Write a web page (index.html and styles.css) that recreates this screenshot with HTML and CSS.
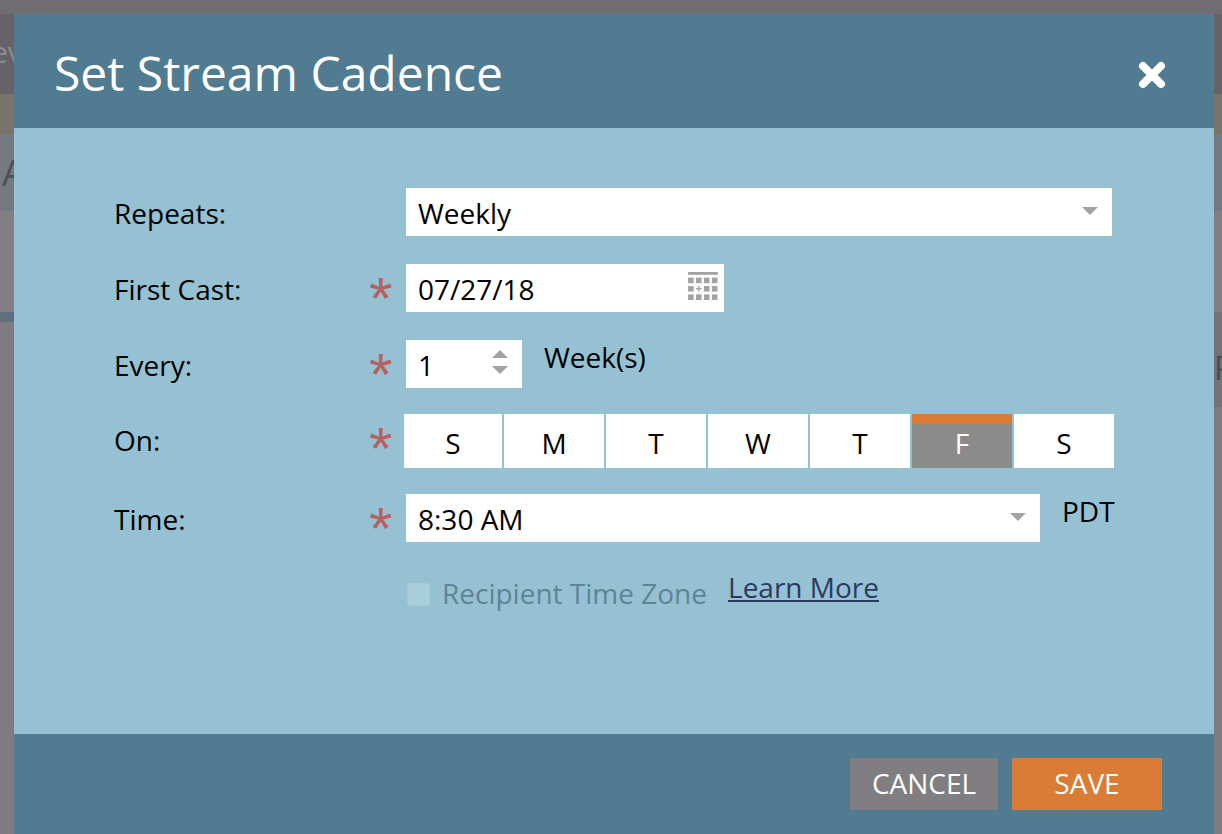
FILE: index.html
```html
<!DOCTYPE html>
<html lang="en">
<head>
  <meta charset="UTF-8" />
  <title>Set Stream Cadence</title>
  <link rel="stylesheet" href="styles.css">
</head>
<body>

  <!-- Page behind the dialog -->
  <div class="backdrop">
    <div class="bg-top"></div>
    <div class="bg-nav"><span class="bg-nav-text">ev</span></div>
    <div class="bg-tan"></div>
    <div class="bg-title"><span class="bg-title-text">A</span></div>
    <div class="bg-body"></div>
    <div class="bg-line"></div>
    <div class="bg-rest"></div>
    <div class="bg-side">P</div>
  </div>

  <div class="modal">
    <div class="modal-head">
      <h1>Set Stream Cadence</h1>
      <svg class="close" width="32" height="32" viewBox="0 0 32 32">
        <path d="M7 7 L25 25 M25 7 L7 25" stroke="#fff" stroke-width="8" stroke-linecap="round" stroke-linejoin="round" fill="none" />
      </svg>
    </div>

    <div class="modal-body">
      <div class="row row-repeats">
        <label class="lbl">Repeats:</label>
        <span class="req"></span>
        <div class="field field-wide">
          <span>Weekly</span>
          <span class="caret"></span>
        </div>
      </div>

      <div class="row row-cast">
        <label class="lbl">First Cast:</label>
        <span class="req">*</span>
        <div class="field field-date">
          <span>07/27/18</span>
          <svg class="cal" width="30" height="28" viewBox="0 0 32 30">
            <rect x="0" y="0" width="32" height="3" fill="#a3a3a3" />
            <g fill="#a3a3a3">
              <rect x="0" y="6" width="6" height="6" /><rect x="8.5" y="6" width="6" height="6" /><rect x="17" y="6" width="6" height="6" /><rect x="25.5" y="6" width="6" height="6" />
              <rect x="0" y="15" width="6" height="6" /><rect x="8.5" y="17" width="6" height="1.5" /><rect x="10.7" y="15" width="1.5" height="6" /><rect x="17" y="15" width="6" height="6" /><rect x="25.5" y="15" width="6" height="6" />
              <rect x="0" y="24" width="6" height="6" /><rect x="8.5" y="24" width="6" height="6" /><rect x="17" y="24" width="6" height="6" /><rect x="25.5" y="24" width="6" height="6" />
            </g>
          </svg>
        </div>
      </div>

      <div class="row row-every">
        <label class="lbl">Every:</label>
        <span class="req">*</span>
        <div class="field field-num">
          <span>1</span>
          <span class="spin"><i class="spin-up"></i><i class="spin-down"></i></span>
        </div>
        <span class="after after-week">Week(s)</span>
      </div>

      <div class="row row-on">
        <label class="lbl">On:</label>
        <span class="req">*</span>
        <div class="days">
          <div class="day day-first">S</div>
          <div class="day">M</div>
          <div class="day">T</div>
          <div class="day">W</div>
          <div class="day">T</div>
          <div class="day day-on">F</div>
          <div class="day">S</div>
        </div>
      </div>

      <div class="row row-time">
        <label class="lbl">Time:</label>
        <span class="req">*</span>
        <div class="field field-time">
          <span>8:30 AM</span>
          <span class="caret"></span>
        </div>
        <span class="after after-pdt">PDT</span>
      </div>

      <div class="row-zone">
        <span class="check"></span>
        <span class="zone-text">Recipient Time Zone</span>
        <a class="learn" href="#">Learn More</a>
      </div>
    </div>

    <div class="modal-foot">
      <button class="btn btn-cancel">CANCEL</button>
      <button class="btn btn-save">SAVE</button>
    </div>
  </div>

</body>
</html>
```

FILE: styles.css
```css
html, body { margin: 0; padding: 0; height: 100%; overflow: hidden; }
body { font-family: 'Open Sans', sans-serif; color: #000; background: #7f7b7e; }

.backdrop { height: 834px; display: flex; flex-direction: column; overflow: hidden; }
.bg-top { height: 14px; background: #6f6d6f; }
.bg-nav { height: 80px; background: #656365; color: #8d8b8d; font-size: 30px; line-height: 76px; white-space: nowrap; }
.bg-nav-text { margin-left: -9px; }
.bg-tan { height: 40px; background: #78736c; }
.bg-title { height: 77px; background: #747a81; color: #4c4f53; font-size: 36px; line-height: 78px; }
.bg-title-text { margin-left: 2px; }
.bg-body { height: 101px; background: #827e81; }
.bg-line { height: 10px; background: #5f6f7d; }
.bg-rest { flex: 1; background: #7f7b7e; }
.bg-side { position: absolute; left: 1214px; top: 312px; width: 8px; height: 95px; background: #747275; color: #4c4b4e; font-size: 32px; line-height: 112px; overflow: hidden; }

/* Dialog */
.modal { position: absolute; left: 14px; top: 14px; width: 1200px; height: 820px; display: flex; flex-direction: column; background: #95c1d2; }

.modal-head { height: 114px; flex: none; background: #517b90; display: flex; align-items: center; justify-content: space-between; padding: 0 46px 0 40px; box-sizing: border-box; }
.modal-head h1 { margin: 0; color: #fff; font-size: 48px; font-weight: 400; line-height: 60px; position: relative; top: 2px; }
.close { position: relative; top: 4px; }

.modal-body { flex: 1; padding: 60px 0 0 100px; }
.row { display: flex; align-items: flex-start; height: 48px; margin-bottom: 28px; font-size: 28px; }
.lbl { width: 255px; line-height: 50px; flex: none; }
.req { width: 37px; flex: none; color: #b8605f; font-size: 60px; line-height: 70px; font-family: 'Liberation Sans', sans-serif; }

.field { background: #fff; height: 48px; box-sizing: border-box; padding: 2px 12px 0; display: flex; align-items: center; justify-content: space-between; line-height: 46px; flex: none; }
.field-wide { width: 706px; }
.field-date { width: 318px; padding-right: 6px; }
.field-num { width: 116px; padding-right: 14px; }
.field-time { width: 634px; }

.caret { width: 0; height: 0; border-left: 8px solid transparent; border-right: 8px solid transparent; border-top: 8px solid #a3a3a3; margin-right: 2px; position: relative; top: -2px; }
.cal { position: relative; top: -3px; }

.spin { display: flex; flex-direction: column; gap: 8px; position: relative; top: -3px; }
.spin i { display: block; width: 0; height: 0; border-left: 8px solid transparent; border-right: 8px solid transparent; }
.spin-up { border-bottom: 8px solid #a3a3a3; }
.spin-down { border-top: 8px solid #a3a3a3; }

.after { line-height: 34px; }
.after-week { margin-left: 22px; }
.after-pdt { margin-left: 22px; }

.row-on { height: 54px; margin-bottom: 26px; margin-top: -2px; }
.row-on .lbl { line-height: 52px; }
.days { display: flex; gap: 2px; margin-left: -2px; }
.day { width: 100px; height: 54px; background: #fff; text-align: center; line-height: 58px; box-sizing: border-box; }
.day-first { width: 98px; }
.day-on { background: #8b8b8b; color: #fff; border-top: 10px solid #d97c36; line-height: 38px; }

.row-zone { display: flex; align-items: center; margin-left: 292px; margin-top: -1px; font-size: 28px; height: 48px; }
.check { width: 23px; height: 23px; background: #aacfdc; border: 1px solid #a5c9d6; border-radius: 3px; box-sizing: border-box; margin-left: 1px; position: relative; top: 1px; }
.zone-text { color: #5e8497; margin-left: 12px; }
.learn { color: #2c3a63; margin-left: 21px; text-decoration: underline; position: relative; top: -6px; }

.modal-foot { height: 100px; flex: none; background: #517b90; display: flex; justify-content: flex-end; padding: 24px 52px 0 0; box-sizing: border-box; gap: 14px; }
.btn { height: 52px; border: none; color: #fff; font-family: 'Open Sans', sans-serif; font-size: 28px; line-height: 50px; padding: 0 0 2px; }
.btn-cancel { width: 148px; background: #807e80; }
.btn-save { width: 150px; background: #d97c36; }
```
